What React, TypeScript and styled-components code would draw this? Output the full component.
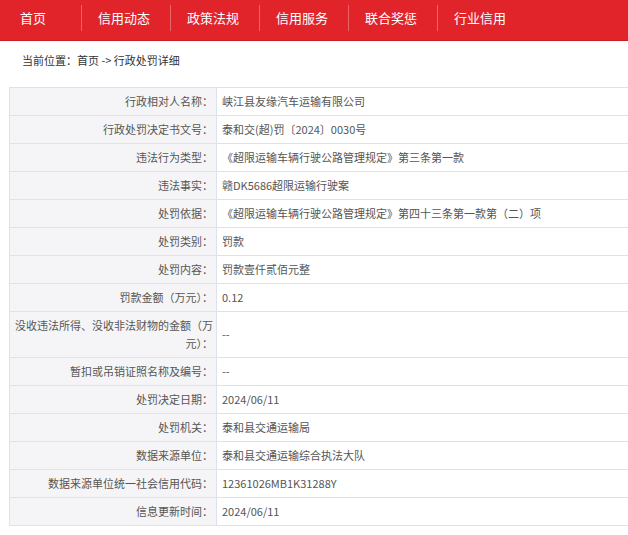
import React from "react";
import styled, { createGlobalStyle } from "styled-components";

const GlobalStyle = createGlobalStyle`
  html, body {
    margin: 0;
    padding: 0;
    background: #fff;
  }
  body {
    font-family: "Noto Sans CJK SC", "Noto Sans", sans-serif;
    overflow: hidden;
  }
`;

const Page = styled.div`
  width: 628px;
  overflow: hidden;
`;

const Nav = styled.nav`
  display: flex;
  height: 41px;
  padding-top: 5px;
  box-sizing: border-box;
  background: #e0242a;
  border-bottom: 1px solid #c81e24;
`;

const NavItem = styled.a<{ $first?: boolean }>`
  flex: 0 0 ${(p) => (p.$first ? "81px" : "89px")};
  height: 26px;
  line-height: 26px;
  box-sizing: border-box;
  padding-left: ${(p) => (p.$first ? "20px" : "16px")};
  border-left: ${(p) => (p.$first ? "none" : "1px solid #ec6468")};
  color: #fff;
  font-size: 13px;
  white-space: nowrap;
  text-decoration: none;
`;

const Breadcrumb = styled.div`
  padding: 10px 22px 18px;
  line-height: 18px;
  font-size: 11px;
  color: #333;
`;

const Table = styled.table`
  margin-left: 9px;
  width: 660px;
  border-collapse: collapse;
  font-size: 11px;
  line-height: 18px;
`;

const Label = styled.th`
  width: 199px;
  padding: 4px 3px 5px 4px;
  background: #f5f5f7;
  border: 1px solid #dde3ec;
  color: #555;
  font-weight: normal;
  text-align: right;
`;

const Value = styled.td`
  padding: 4px 5px 5px;
  background: #fff;
  border: 1px solid #dde3ec;
  color: #555;
  text-align: left;
`;

const navItems = ["首页", "信用动态", "政策法规", "信用服务", "联合奖惩", "行业信用"];

const rows: [string, string][] = [
  ["行政相对人名称：", "峡江县友缘汽车运输有限公司"],
  ["行政处罚决定书文号：", "泰和交(超)罚〔2024〕0030号"],
  ["违法行为类型：", "《超限运输车辆行驶公路管理规定》第三条第一款"],
  ["违法事实：", "赣DK5686超限运输行驶案"],
  ["处罚依据：", "《超限运输车辆行驶公路管理规定》第四十三条第一款第（二）项"],
  ["处罚类别：", "罚款"],
  ["处罚内容：", "罚款壹仟贰佰元整"],
  ["罚款金额（万元）：", "0.12"],
  ["没收违法所得、没收非法财物的金额（万元）：", "--"],
  ["暂扣或吊销证照名称及编号：", "--"],
  ["处罚决定日期：", "2024/06/11"],
  ["处罚机关：", "泰和县交通运输局"],
  ["数据来源单位：", "泰和县交通运输综合执法大队"],
  ["数据来源单位统一社会信用代码：", "12361026MB1K31288Y"],
  ["信息更新时间：", "2024/06/11"],
];

export default function App() {
  return (
    <Page>
      <GlobalStyle />
      <Nav>
        {navItems.map((item, i) => (
          <NavItem key={item} href="#" $first={i === 0}>
            {item}
          </NavItem>
        ))}
      </Nav>
      <Breadcrumb>当前位置：首页 -&gt; 行政处罚详细</Breadcrumb>
      <Table>
        <tbody>
          {rows.map(([label, value]) => (
            <tr key={label}>
              <Label>{label}</Label>
              <Value>{value}</Value>
            </tr>
          ))}
        </tbody>
      </Table>
    </Page>
  );
}
